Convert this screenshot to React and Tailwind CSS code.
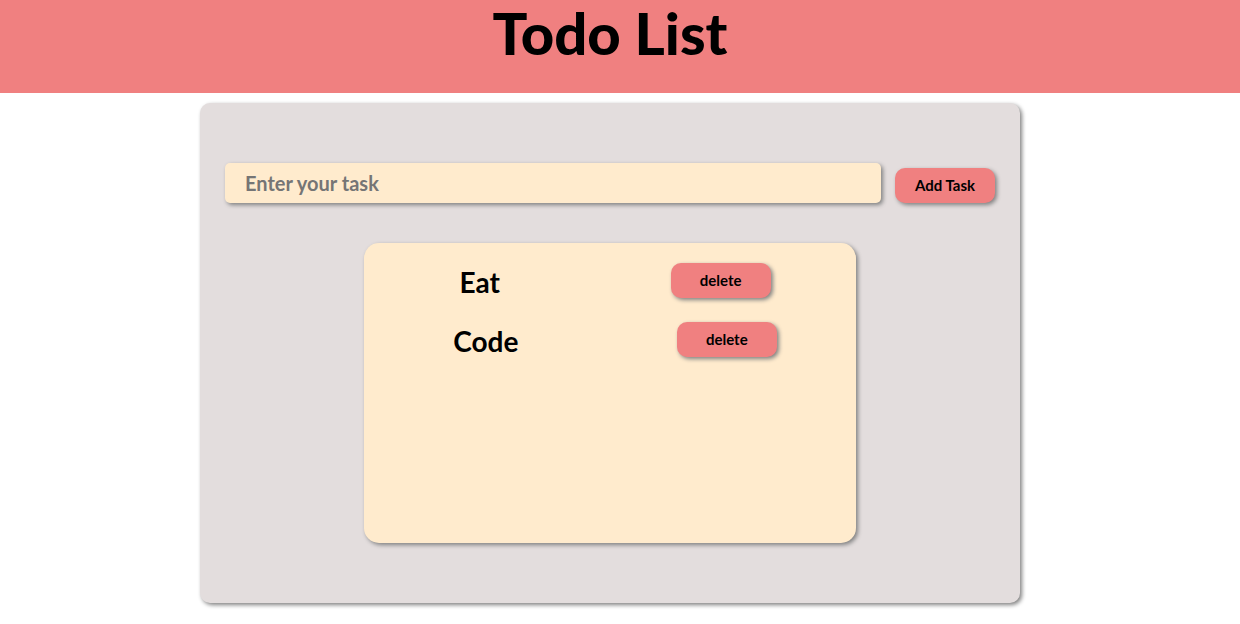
import { useState } from 'react';

const buttonClass =
  'h-[35px] w-[100px] shrink-0 cursor-pointer rounded-[10px] bg-[#f08080] text-[15px] font-bold text-black shadow-[2px_2px_4px_gray]';

export default function App() {
  const [tasks, setTasks] = useState(['Eat', 'Code']);
  const [draft, setDraft] = useState('');

  function addTask(event) {
    event.preventDefault();
    if (!draft.trim()) return;
    setTasks([...tasks, draft.trim()]);
    setDraft('');
  }

  return (
    <div className="min-h-screen bg-white font-['Lato',sans-serif] text-black">
      <header className="bg-[#f08080] pr-5 pb-[27px] text-center">
        <h1 className="text-[58px] leading-[66px] font-black">Todo List</h1>
      </header>
      <div className="pt-2.5 pr-5 pb-5">
        <main className="mx-auto min-h-[500px] max-w-[820px] rounded-[10px] bg-[#e3dddd] px-[25px] py-[60px] shadow-[2px_2px_4px_gray]">
          <form onSubmit={addTask} className="flex items-end gap-3.5">
            <input
              type="text"
              aria-label="Task"
              placeholder="Enter your task"
              value={draft}
              onChange={(event) => setDraft(event.target.value)}
              className="h-10 min-w-0 flex-1 rounded-[5px] bg-[#ffebcd] px-5 text-xl font-bold shadow-[2px_2px_4px_gray] outline-none placeholder:text-[#757575]"
            />
            <button type="submit" className={buttonClass}>Add Task</button>
          </form>
          <ul className="mx-auto mt-10 flex min-h-[300px] max-w-[492px] flex-col gap-5 rounded-[15px] bg-[#ffebcd] py-5 shadow-[2px_2px_4px_gray]">
            {tasks.map((task, index) => (
              <li key={index} className="flex items-start justify-around">
                <h2 className="ml-2.5 text-[28px] leading-[39px] font-bold">{task}</h2>
                <button
                  type="button"
                  onClick={() => setTasks(tasks.filter((_, i) => i !== index))}
                  className={buttonClass}
                >
                  delete
                </button>
              </li>
            ))}
          </ul>
        </main>
      </div>
    </div>
  );
}
